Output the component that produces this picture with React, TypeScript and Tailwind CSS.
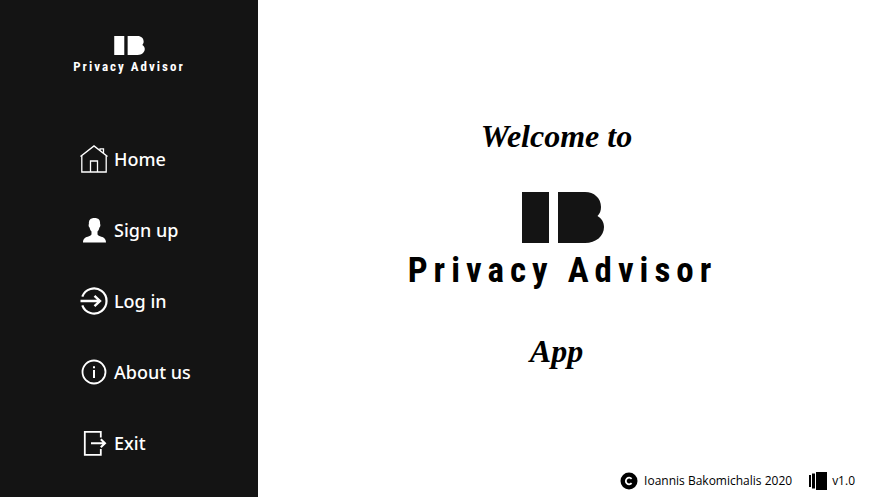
import type { ReactNode } from "react";

function Monogram({ className }: { className: string }) {
  return (
    <svg viewBox="0 0 82 51" className={className} fill="currentColor" aria-hidden="true">
      <path d="M0 0H27V51H0Z" />
      <path d="M36 0H63C72 0 79 6 79 15C79 18.500 78 21.500 75.500 24C79.500 26.500 82 30 82 35C82 44 74 51 63 51H36Z" />
    </svg>
  );
}

function HomeIcon() {
  return (
    <svg viewBox="0 0 28 28" className="size-7" fill="none" stroke="currentColor" strokeWidth="1.3" aria-hidden="true">
      <path d="M0.5 11.5L14 1L27.5 11.5" strokeWidth="1.5" />
      <path d="M1.8 11V27H26.2V11" />
      <path d="M10.5 27V16H17.5V27" />
      <path d="M20 5.5V3.8H23.5V8" />
    </svg>
  );
}

function UserIcon() {
  return (
    <svg viewBox="0 0 28 28" className="size-7" fill="currentColor" aria-hidden="true">
      <path d="M14.5 2C10.4 2 8.6 4 8.9 8C8.3 8.8 8.600 11 9.600 11.6C9.900 13.6 10.600 14.7 11.5 15.6V18C11.5 19 10.600 19.6 9 20.2C5.5 21.3 3 22.3 3 26.5H26C26 22.3 23.5 21.3 20 20.2C18.400 19.6 17.5 19 17.5 18V15.6C18.400 14.7 19.1 13.6 19.4 11.6C20.4 11 20.7 8.8 20.1 8C20.4 4 18.6 2 14.5 2Z" />
    </svg>
  );
}

function LoginIcon() {
  return (
    <svg viewBox="0 0 28 28" className="size-7" fill="none" stroke="currentColor" strokeWidth="2.2" aria-hidden="true">
      <path d="M2.300 9.7A12.5 12.5 0 1 1 2.300 18.3" />
      <path d="M0.5 14H20M14.5 8.8L20 14L14.5 19.2" strokeWidth="2.4" />
    </svg>
  );
}

function InfoIcon() {
  return (
    <svg viewBox="0 0 28 28" className="size-7" fill="none" stroke="currentColor" strokeWidth="1.8" aria-hidden="true">
      <circle cx="14" cy="14" r="11.5" />
      <path d="M14 8.2V10.2M14 12V20" strokeWidth="2" />
    </svg>
  );
}

function ExitIcon() {
  return (
    <svg viewBox="0 0 28 28" className="size-7" fill="none" stroke="currentColor" strokeWidth="1.8" aria-hidden="true">
      <path d="M20.8 8.5V2.8H4.8V25.8H20.8V20" />
      <path d="M11 14.3H25M20.8 10.3L25 14.3L20.8 18.3" strokeWidth="2" />
    </svg>
  );
}

const items: { label: string; icon: ReactNode }[] = [
  { label: "Home", icon: <HomeIcon /> },
  { label: "Sign up", icon: <UserIcon /> },
  { label: "Log in", icon: <LoginIcon /> },
  { label: "About us", icon: <InfoIcon /> },
  { label: "Exit", icon: <ExitIcon /> },
];

export default function App() {
  return (
    <div className="flex min-h-screen bg-white font-['Noto_Sans',sans-serif] text-black">
      <aside className="w-[258px] shrink-0 bg-[#141414] text-white">
        <div className="flex flex-col items-center pt-9">
          <Monogram className="h-[19px] w-[31px]" />
          <p className="pt-1 font-['Roboto_Condensed','Roboto',sans-serif] text-[13px] leading-4 font-bold tracking-[2px]">
            Privacy Advisor
          </p>
        </div>
        <nav className="pt-12">
          {items.map((item) => (
            <button
              key={item.label}
              type="button"
              className="flex h-[71px] w-full items-center gap-[6px] pl-20 text-[18px] leading-6 font-medium"
            >
              {item.icon}
              <span>{item.label}</span>
            </button>
          ))}
        </nav>
      </aside>

      <div className="flex flex-1 flex-col">
        <main className="flex flex-1 flex-col items-center justify-center pt-4 pr-4">
          <h1 className="pr-3 font-['Liberation_Serif',serif] text-[32px] leading-10 font-bold italic">Welcome to</h1>
          <div className="flex flex-col items-center pt-9 pb-10">
            <Monogram className="h-[51px] w-[82px] text-[#141414]" />
            <p className="pt-2 font-['Roboto_Condensed','Roboto',sans-serif] text-[35px] leading-10 font-bold tracking-[6px]">
              Privacy Advisor
            </p>
          </div>
          <p className="pr-3 font-['Liberation_Serif',serif] text-[32px] leading-10 font-bold italic">App</p>
        </main>
        <footer className="flex items-center justify-end gap-4 pr-7 pb-[6px] font-['Open_Sans',sans-serif] text-[12px] leading-5 font-medium">
          <div className="flex items-center gap-[6px]">
            <svg viewBox="0 0 18 18" className="size-[18px]" aria-hidden="true">
              <circle cx="9" cy="9" r="8.5" fill="black" />
              <path d="M11.6 6.8A3.3 3.3 0 1 0 11.6 11.2" fill="none" stroke="white" strokeWidth="1.8" />
            </svg>
            <span>Ioannis Bakomichalis 2020</span>
          </div>
          <div className="flex items-center gap-1">
            <svg viewBox="0 0 20 18" className="h-[18px] w-5" aria-hidden="true">
              <path d="M1 3H3V15H1ZM4 1.5H7V16.5H4ZM8 0H19V18H8Z" fill="black" />
            </svg>
            <span>v1.0</span>
          </div>
        </footer>
      </div>
    </div>
  );
}
